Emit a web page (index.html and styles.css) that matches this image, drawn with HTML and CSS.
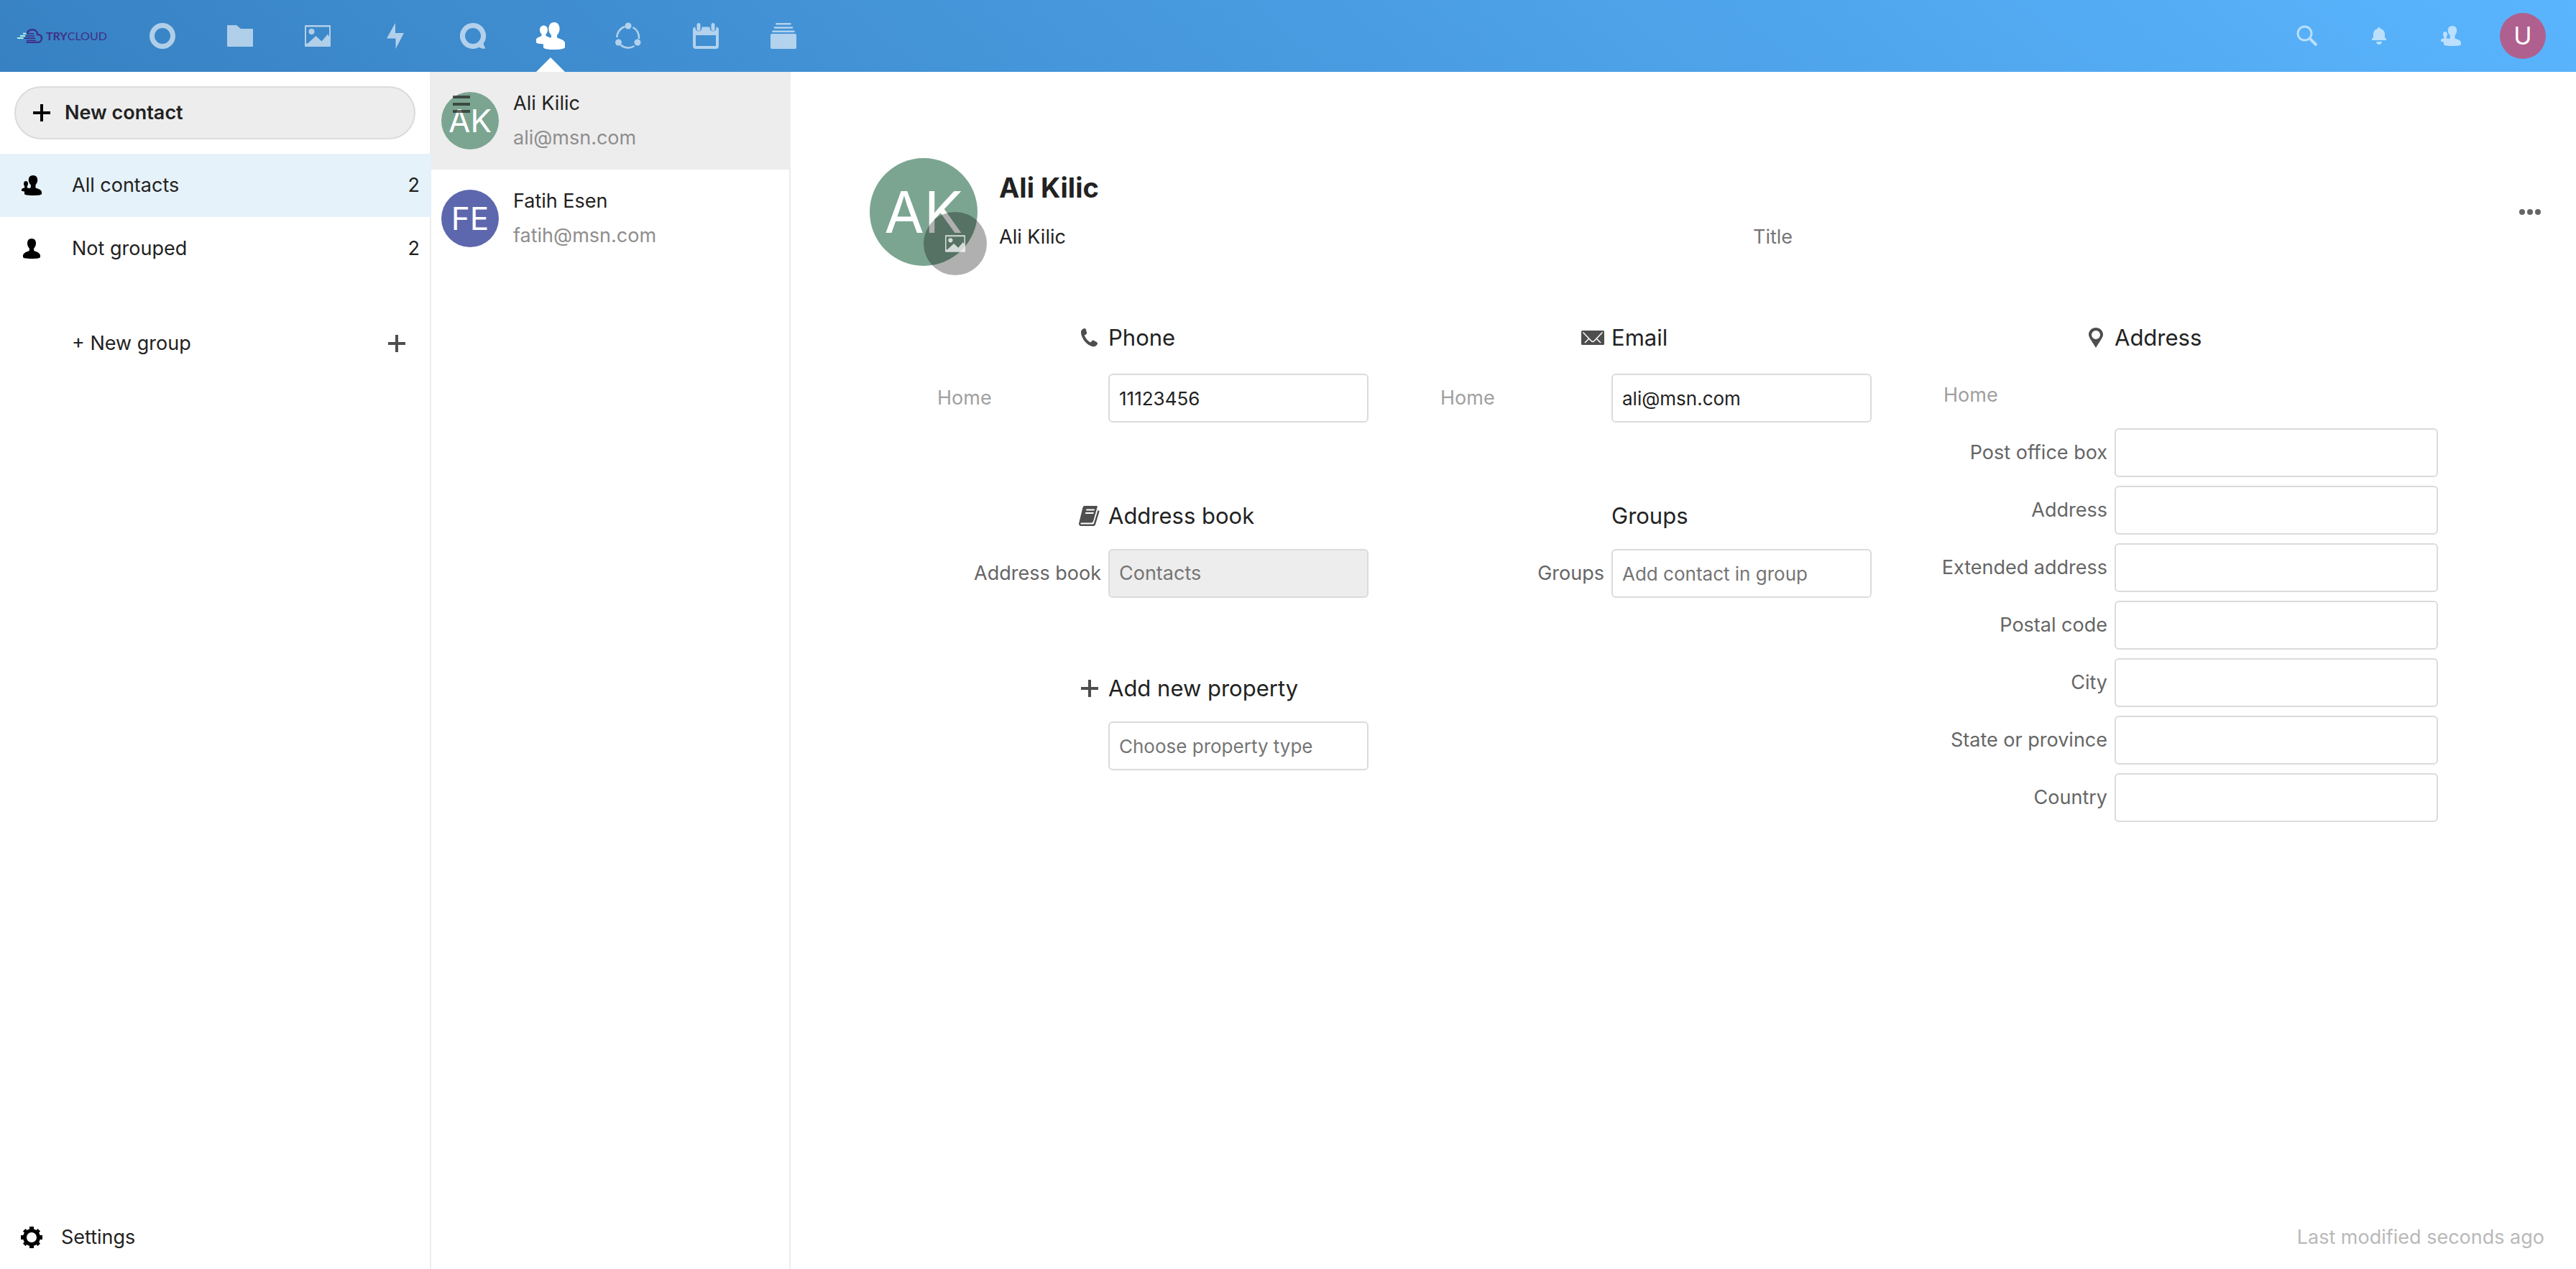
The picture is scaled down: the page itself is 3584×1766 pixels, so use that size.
FILE: index.html
```html
<!DOCTYPE html>
<html lang="en">
<head>
<meta charset="utf-8">
<title>Contacts - Trycloud</title>
<link rel="stylesheet" href="styles.css">
</head>
<body>
<svg class="sprite" aria-hidden="true">
  <symbol id="i-picture" viewBox="0 0 36 30"><path fill-rule="evenodd" d="M1 0h34a1 1 0 0 1 1 1v28a1 1 0 0 1-1 1H1a1 1 0 0 1-1-1V1a1 1 0 0 1 1-1zM2 2.500V25.500h2L15.500 15l8 7.500L32 12.500l2 3.500V2.500zM9.500 5a4 4 0 1 1 0 8 4 4 0 0 1 0-8z"/></symbol>
  <symbol id="i-contacts" viewBox="0 0 40 38"><path d="M25 0c5 0 7.600 4 7.600 9 0 4-1.600 7-3.600 9v3.500c4 1.500 11 3.500 11 7V35c0 1.500-5 3-15 3s-15-1.500-15-3v-4.500C5 30 0 29.500 0 28v-4c0-2 4-3.500 7.500-5v-2.500C6 15 5 13 5 10.500 5 7 7.500 4.500 10.500 4.500S16 7 16 10.500c0 2.500-1 4.500-2.500 6V19c2 .800 4.500 1.500 5.500 2.500l2-.5v-3c-2-2-3.600-5-3.600-9 0-5 2.600-9 7.600-9z"/></symbol>
  <symbol id="i-group" viewBox="0 0 28 28"><path d="M16 0c4 0 6.200 2.800 6.200 6.500 0 3-1.200 5-2.700 6.700V17.500c3 1 8.500 2.500 8.500 6V26c0 1-4 2-12 2S4 27 4 26v-3.500C1.500 22.300 0 22 0 21.200v-1.700c0-1 2-1.500 4.200-2.300V15C3.300 14 3 13 3 11.500 3 9.500 4.200 8 6 8s3 1.500 3 3.500C9 13 8.700 14 7.800 15v2.200l2.500.800 2.500-.700v-4.100C11 11.500 9.800 9.500 9.800 6.500 9.800 2.800 12 0 16 0z"/></symbol>
  <symbol id="i-user" viewBox="0 0 28 28"><path d="M14 0c4 0 6 2.800 6 6.500 0 3-1 5-2.800 7V17c3 1 8.800 3 8.800 6.500V26c0 1-4 2-12 2S2 27 2 26v-2.500C2 20 8 18 10.800 17v-3.500C9 11.500 8 9.500 8 6.500 8 2.800 10 0 14 0z"/></symbol>
  <symbol id="i-plus" viewBox="0 0 24 24"><path d="M10 0h4v10h10v4H14v10h-4V14H0v-4h10z"/></symbol>
</svg>

<header class="topbar">
  <a class="logo" href="#" aria-label="Trycloud home">
    <svg class="logo-mark" width="36" height="20" viewBox="0 0 36 20" fill="none">
      <path d="M8 6.800h4.500M4 9.900h7M0 13.100h8.500" stroke="#b4f3e4" stroke-width="2"/>
      <path d="M14 7C14 3 18 1 21.500 1.200 26 1.500 28 5 28 8c4 0 6 2 6 5.500 0 3.500-3 5.500-6 5.500H12.500" stroke="#3f2f86" stroke-width="2.400"/>
      <path d="M14 6.800h9M12 10h12M10 13.100h15M13 16.200h13" stroke="#3f2f86" stroke-width="1.600"/>
    </svg>
    <span class="logo-text"><b>TRY</b>CLOUD</span>
  </a>
  <nav class="apps" aria-label="Apps">
    <a href="#" aria-label="Dashboard"><svg width="36" height="36" viewBox="0 0 36 36"><circle cx="18" cy="18" r="14.500" fill="none" stroke="currentColor" stroke-width="7"/></svg></a>
    <a href="#" aria-label="Files"><svg width="36" height="30" viewBox="0 0 36 30"><path d="M1 0h12l6 5h16a1 1 0 0 1 1 1v23a1 1 0 0 1-1 1H1a1 1 0 0 1-1-1V1a1 1 0 0 1 1-1z"/></svg></a>
    <a href="#" aria-label="Photos"><svg width="36" height="30"><use href="#i-picture"/></svg></a>
    <a href="#" aria-label="Activity"><svg width="24" height="36" viewBox="0 0 24 36"><path d="M12 0v14h12L12.500 36V21.500H0z"/></svg></a>
    <a href="#" aria-label="Talk"><svg width="36" height="36" viewBox="0 0 36 36"><path fill-rule="evenodd" d="M18 0a18 18 0 0 1 14.600 28.500c.400 2.500 1.400 4.700 3.100 6.800-3 1-6.200.2-9-1.600A18 18 0 1 1 18 0zm0 7a11 11 0 1 0 0 22 11 11 0 0 0 0-22z"/></svg></a>
    <a class="current" href="#" aria-label="Contacts" aria-current="page"><svg width="40" height="38"><use href="#i-contacts"/></svg></a>
    <a href="#" aria-label="Circles"><svg width="36" height="38" viewBox="0 0 36 38"><g fill="none" stroke="currentColor" stroke-width="2.500"><path d="M13.500 6A16 16 0 0 0 2.300 21M24.500 7A16 16 0 0 1 33 23M7.500 31.500a16 16 0 0 0 19 1.500"/></g><circle cx="18" cy="5" r="4.500"/><circle cx="4.500" cy="28" r="4.500"/><circle cx="31" cy="28" r="4.500"/></svg></a>
    <a href="#" aria-label="Calendar"><svg width="36" height="36" viewBox="0 0 36 36"><path fill-rule="evenodd" d="M3.500 5.500V7c0 6 9 6 9 0V5.500h11V7c0 6 9 6 9 0V5.500C35 5.700 36 7.500 36 9v23a4 4 0 0 1-4 4H4a4 4 0 0 1-4-4V9c0-1.500 1-3.300 3.500-3.500zM4 17v15h28V17z"/><rect x="5.500" y="0" width="5" height="11" rx="2.500"/><rect x="25.500" y="0" width="5" height="11" rx="2.500"/></svg></a>
    <a href="#" aria-label="Deck"><svg width="36" height="36" viewBox="0 0 36 36"><rect y="15" width="36" height="21" rx="2"/><path d="M8.500 0h19a.8.800 0 0 1 0 2.600h-19a.8.800 0 0 1 0-2.600zM6 5.200h24a.8.800 0 0 1 0 2.600H6a.8.800 0 0 1 0-2.600zM3.500 10.400h29a.8.800 0 0 1 0 2.600h-29a.8.800 0 0 1 0-2.600z"/></svg></a>
  </nav>
  <div class="tools">
    <button type="button" aria-label="Search"><svg width="30" height="30" viewBox="0 0 30 30" fill="none" stroke="currentColor"><circle cx="11.500" cy="11.500" r="9.500" stroke-width="3"/><path d="M19 19l9 9" stroke-width="4"/></svg></button>
    <button type="button" aria-label="Notifications"><svg width="20" height="24" viewBox="0 0 20 24"><path d="M10 0c1.200 0 2 .8 2.200 2C16 3 18 6 18 9.500V14l2 2v2H0v-2l2-2V9.500C2 6 4 3 7.800 2 8 .8 8.800 0 10 0zM6 20h8c-.4 2.500-2 4-4 4s-3.600-1.500-4-4z"/></svg></button>
    <button type="button" aria-label="Contacts menu"><svg width="28" height="28"><use href="#i-group"/></svg></button>
    <button class="user" type="button" aria-label="Account">U</button>
  </div>
</header>

<div class="layout">
  <nav class="sidebar" aria-label="Groups">
    <button class="new-contact" type="button"><svg width="24" height="24"><use href="#i-plus"/></svg>New contact</button>
    <ul class="groups">
      <li><a class="group selected" href="#"><svg width="28" height="28"><use href="#i-group"/></svg><span>All contacts</span><span>2</span></a></li>
      <li><a class="group" href="#"><svg width="28" height="28"><use href="#i-user"/></svg><span>Not grouped</span><span>2</span></a></li>
    </ul>
    <div class="new-group">
      <a href="#">+ New group</a>
      <button type="button" aria-label="Add group"><svg width="24" height="24"><use href="#i-plus"/></svg></button>
    </div>
    <button class="settings" type="button"><svg width="30" height="30" viewBox="0 0 30 30"><g stroke="currentColor" stroke-width="6"><path d="M15 0v7M15 23v7M0 15h7M23 15h7"/><path d="M4.700 4.700l4 4M21.300 21.300l4 4M25.300 4.700l-4 4M8.700 21.300l-4 4" stroke-width="5"/></g><circle cx="15" cy="15" r="9.500" fill="none" stroke="currentColor" stroke-width="5"/></svg>Settings</button>
  </nav>

  <section class="list" aria-label="Contact list">
    <button class="menu" type="button" aria-label="Toggle navigation"><svg width="24" height="24" viewBox="0 0 24 24"><path d="M0 0h24v4H0zM0 10h24v4H0zM0 20h24v4H0z"/></svg></button>
    <a class="person selected" href="#">
      <span class="avatar green">AK</span>
      <span class="who"><span>Ali Kilic</span><span class="mail">ali@msn.com</span></span>
    </a>
    <a class="person" href="#">
      <span class="avatar violet">FE</span>
      <span class="who"><span>Fatih Esen</span><span class="mail">fatih@msn.com</span></span>
    </a>
  </section>

  <main class="details">
    <header class="card-head">
      <div class="portrait">
        <span class="avatar large green">AK</span>
        <button class="upload" type="button" aria-label="Change picture"><svg width="28" height="24"><use href="#i-picture"/></svg></button>
      </div>
      <div class="names">
        <input class="fullname" aria-label="Name" value="Ali Kilic">
        <div class="org">
          <input aria-label="Company" value="Ali Kilic">
          <input aria-label="Title" placeholder="Title">
        </div>
      </div>
      <button class="more" type="button" aria-label="Actions"><svg width="30" height="8" viewBox="0 0 30 8"><circle cx="4" cy="4" r="4"/><circle cx="15" cy="4" r="4"/><circle cx="26" cy="4" r="4"/></svg></button>
    </header>

    <form class="columns">
      <div class="column">
        <section class="block">
          <h3><svg width="32" height="26" viewBox="-3 0 32 26"><path d="M5 .3C6.800-.3 7.600.5 8 2l1 3.800c.3 1.500-.3 2.300-1.500 2.900L5.800 9.500c1.200 4 4.400 8 8.700 10l1.600-2c.8-1 1.900-1.200 3-.5l3.500 1.900c1.400.8 1.900 1.900 1 3.400-1.600 2.700-4.500 3.500-7.600 2.600C8.500 22.500 2.300 15 1 6.500.7 3.500 2 1.300 5 .3z"/></svg><span>Phone</span></h3>
          <div class="row tall">
            <select class="kind" aria-label="Phone type"><option>Home</option></select>
            <input class="field" type="tel" aria-label="Phone number" value="11123456">
          </div>
        </section>
        <section class="block">
          <h3><svg width="32" height="28" viewBox="-1 0 32 28"><path fill-rule="evenodd" d="M8 0h16.500c1 0 1.500.8 1.200 1.800L20 21.500c-.4 1.200-1.200 2-2.500 2H3.500c-1.500 0-1.500 2 0 2H19c1.200 0 1.700-.5 2-1.500L26.500 6c1 .3 2.200.9 2 2L23 26c-.4 1.300-1.300 2-2.500 2H3C1 28 0 26.500 0 24.500L5.500 2C5.900.7 6.800 0 8 0zm2.500 4.500L10 6.500h11.500l.5-2zM9.300 9l-.5 2h11.500l.5-2z"/></svg><span>Address book</span></h3>
          <div class="row">
            <label for="book">Address book</label>
            <select class="field" id="book" disabled><option>Contacts</option></select>
          </div>
        </section>
        <section class="block">
          <h3><svg width="32" height="24"><use href="#i-plus"/></svg><span>Add new property</span></h3>
          <div class="row">
            <input class="field" aria-label="Property type" placeholder="Choose property type">
          </div>
        </section>
      </div>

      <div class="column">
        <section class="block">
          <h3><svg width="32" height="20" viewBox="0 0 32 20"><rect width="32" height="20" rx="1.500"/><path d="M2.500 2.500l11.500 12c1.200 1.200 2.800 1.200 4 0l11.500-12M5 17l6-6M27 17l-6-6" fill="none" stroke="#fff" stroke-width="1.500"/></svg><span>Email</span></h3>
          <div class="row tall">
            <select class="kind" aria-label="Email type"><option>Home</option></select>
            <input class="field" type="email" aria-label="Email address" value="ali@msn.com">
          </div>
        </section>
        <section class="block">
          <h3><span>Groups</span></h3>
          <div class="row">
            <label for="groups">Groups</label>
            <input class="field" id="groups" placeholder="Add contact in group">
          </div>
        </section>
      </div>

      <div class="column address">
        <section class="block">
          <h3><svg width="32" height="28" viewBox="-6 0 32 28"><path fill-rule="evenodd" d="M10 0c5.500 0 10 4.200 10 9.500 0 4-3.500 8-10 18.500C3.500 17.500 0 13.500 0 9.500 0 4.200 4.500 0 10 0zm0 4a6 6 0 1 0 0 12 6 6 0 0 0 0-12z"/></svg><span>Address</span></h3>
          <div class="row"><select class="kind" aria-label="Address type"><option>Home</option></select></div>
          <div class="row"><label for="box">Post office box</label><input class="field" id="box"></div>
          <div class="row"><label for="street">Address</label><input class="field" id="street"></div>
          <div class="row"><label for="extended">Extended address</label><input class="field" id="extended"></div>
          <div class="row"><label for="postal">Postal code</label><input class="field" id="postal"></div>
          <div class="row"><label for="city">City</label><input class="field" id="city"></div>
          <div class="row"><label for="state">State or province</label><input class="field" id="state"></div>
          <div class="row"><label for="country">Country</label><input class="field" id="country"></div>
        </section>
      </div>
    </form>
    <p class="modified">Last modified seconds ago</p>
  </main>
</div>
</body>
</html>
```
FILE: styles.css
```css
* { box-sizing: border-box; }

body {
  margin: 0;
  min-height: 100vh;
  display: flex;
  flex-direction: column;
  background: #fff;
  color: #222;
  font-family: Inter, "Liberation Sans", sans-serif;
  font-size: 27px;
  line-height: 48px;
}

a { color: inherit; text-decoration: none; }
button, input, select { font: inherit; color: inherit; margin: 0; }
button { padding: 0; border: 0; background: none; cursor: pointer; }
svg { display: block; flex: none; fill: currentColor; }
svg[fill="none"] { fill: none; }
.sprite { position: absolute; width: 0; height: 0; }

/* Top bar */
.topbar {
  display: flex;
  align-items: center;
  height: 100px;
  padding: 0 24px;
  background: linear-gradient(40deg, #3781c2 0%, #5ab5fe 100%);
}
.logo { display: flex; align-items: center; gap: 4px; width: 148px; color: #3f2f86; }
.logo-text { font-family: Lato, sans-serif; font-size: 16px; line-height: 20px; }
.apps { display: flex; flex: 1; color: #fff; }
.apps a {
  position: relative;
  display: flex;
  align-items: center;
  justify-content: center;
  width: 108px;
  height: 100px;
}
.apps svg, .tools svg { opacity: .6; }
.apps .current svg { opacity: 1; }
.apps .current::after {
  content: "";
  position: absolute;
  bottom: 0;
  left: 34px;
  border: 20px solid transparent;
  border-top: 0;
  border-bottom-color: #fff;
}
.tools { display: flex; align-items: center; color: #fff; }
.tools button { display: flex; align-items: center; justify-content: center; width: 100px; height: 100px; }
.tools .user {
  width: 64px;
  height: 64px;
  margin: 0 18px;
  border-radius: 50%;
  background: #b0608e;
  font-size: 34px;
}

.layout { display: flex; flex: 1; }

/* Groups sidebar */
.sidebar {
  display: flex;
  flex-direction: column;
  flex: 0 0 600px;
  border-right: 2px solid #ededed;
}
.new-contact {
  display: flex;
  align-items: center;
  gap: 20px;
  height: 74px;
  margin: 20px;
  padding: 0 24px;
  border: 2px solid #dbdbdb;
  border-radius: 37px;
  background: #ededed;
  font-weight: 600;
}
.new-contact svg, .group svg, .settings svg { color: #000; }
.groups { margin: 0 -2px 0 0; padding: 0; list-style: none; }
.group { display: flex; align-items: center; gap: 42px; height: 88px; padding: 0 16px 0 30px; }
.group span:nth-of-type(1) { flex: 1; }
.group.selected { background: #e6f2f9; }
.new-group {
  display: flex;
  align-items: center;
  justify-content: space-between;
  height: 88px;
  margin-top: 44px;
  padding: 0 34px 0 100px;
}
.new-group svg { color: #4e4e4e; }
.settings { display: flex; align-items: center; gap: 26px; height: 88px; margin-top: auto; padding-left: 29px; }

/* Contact list */
.list { position: relative; flex: 0 0 500px; border-right: 2px solid #ededed; }
.menu { position: absolute; z-index: 1; top: 33px; left: 30px; color: #222; opacity: .7; }
.person { display: flex; align-items: center; gap: 20px; height: 136px; padding: 0 14px; }
.person.selected { margin-right: -2px; background: #ededed; }
.who { display: flex; flex-direction: column; }
.mail { color: #8e8e8e; }
.avatar {
  display: flex;
  align-items: center;
  justify-content: center;
  width: 80px;
  height: 80px;
  border-radius: 50%;
  color: #fff;
  font-size: 44px;
}
.green { background: #7ba591; }
.violet { background: #5d67ae; }
.large { width: 150px; height: 150px; font-size: 80px; }

/* Contact details */
.details { display: flex; flex-direction: column; flex: 1; min-width: 0; }
.card-head { display: flex; align-items: center; padding: 120px 20px 0 110px; }
.portrait { position: relative; margin-right: 30px; }
.upload {
  position: absolute;
  left: 75px;
  top: 75px;
  display: flex;
  align-items: center;
  justify-content: center;
  width: 88px;
  height: 88px;
  border-radius: 50%;
  background: rgba(0, 0, 0, .31);
  color: rgba(255, 255, 255, .75);
}
.names { flex: 1; }
.names input { width: 100%; height: 68px; padding: 0; border: 0; background: none; }
.names .fullname { font-size: 38px; font-weight: 700; }
.org { display: grid; grid-template-columns: 1fr 1fr; column-gap: 12px; }
.org input::placeholder { color: #757575; opacity: 1; }
.more { display: flex; align-items: center; justify-content: center; width: 88px; height: 88px; color: #666; }

.columns { display: flex; justify-content: center; padding: 60px 192px 0; }
.column { flex: 0 1 700px; }
.block { margin-bottom: 80px; }
h3, .row {
  display: grid;
  grid-template-columns: 240px 1fr;
  column-gap: 10px;
  align-items: center;
  height: 80px;
}
h3 { margin: 0; font-size: 31px; font-weight: 400; }
h3 svg { justify-self: end; color: #4e4e4e; }
h3 span { grid-column: 2; }
.tall { height: 88px; }
.row label { color: #666; text-align: right; white-space: nowrap; }
.field {
  grid-column: 2;
  width: calc(100% - 88px);
  height: 68px;
  padding: 0 13px;
  border: 2px solid #dbdbdb;
  border-radius: 6px;
  background: #fff;
  font-size: 26px;
}
.address .field { width: 100%; }
.field::placeholder { color: #757575; opacity: 1; }
select { appearance: none; }
select.field { font-size: 27px; background: #ededed; color: #757575; opacity: 1; }
.kind { padding: 0 0 0 12px; border: 0; background: none; color: #a0a0a0; opacity: 1; }
.modified { margin: auto 44px 20px auto; color: #b9b9b9; }
```
